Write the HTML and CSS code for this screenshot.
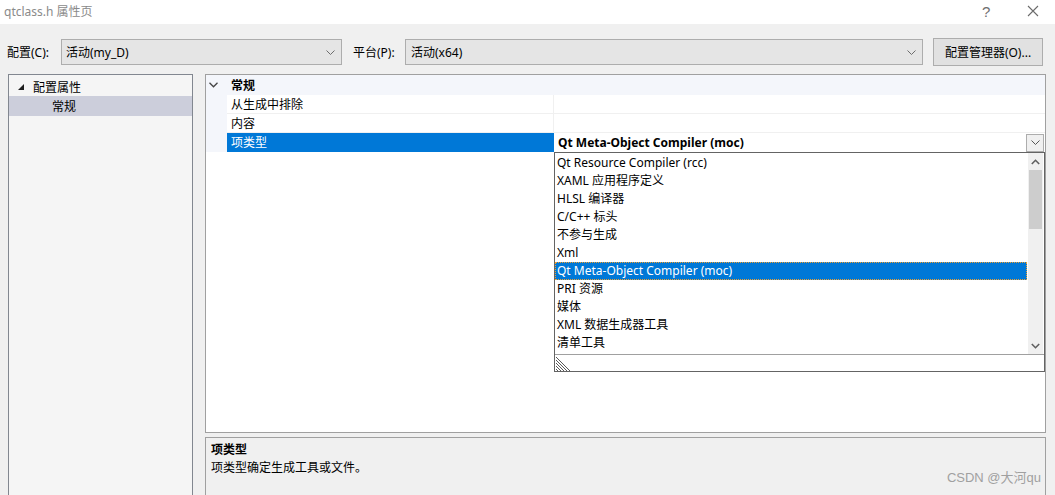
FILE: index.html
```html
<!DOCTYPE html>
<html lang="zh-CN">
<head>
    <meta charset="UTF-8">
    <title>qtclass.h 属性页</title>
    <link rel="stylesheet" href="styles.css">
</head>
<body>
    <div class="window">
        <div class="titlebar">
            <span class="title">qtclass.h 属性页</span>
            <span class="help">?</span>
            <span class="close">
                <svg width="12" height="12" viewBox="0 0 12 12"><path d="M1 1L11 11M11 1L1 11" stroke="#6b6b6b" stroke-width="1.1" fill="none"/></svg>
            </span>
        </div>

        <div class="toolbar">
            <label class="tb-label">配置(C):</label>
            <div class="combo combo-config">
                <span>活动(my_D)</span>
                <svg class="chev" width="9" height="5" viewBox="0 0 9 5"><path d="M0.5 0.5L4.5 4.5L8.5 0.5" stroke="#6d6d6d" fill="none"/></svg>
            </div>
            <label class="tb-label">平台(P):</label>
            <div class="combo combo-platform">
                <span>活动(x64)</span>
                <svg class="chev" width="9" height="5" viewBox="0 0 9 5"><path d="M0.5 0.5L4.5 4.5L8.5 0.5" stroke="#6d6d6d" fill="none"/></svg>
            </div>
            <button class="btn">配置管理器(O)...</button>
        </div>

        <div class="main">
            <div class="tree">
                <div class="tree-row">
                    <svg class="tri" width="6" height="6" viewBox="0 0 6 6"><polygon points="6,0 6,6 0,6" fill="#1e1e1e"/></svg>
                    <span>配置属性</span>
                </div>
                <div class="tree-row child selected"><span>常规</span></div>
            </div>

            <div class="right">
                <div class="grid">
                    <div class="cat-row">
                        <svg class="cat-chev" width="9" height="6" viewBox="0 0 9 6"><path d="M0.5 0.8L4.5 4.8L8.5 0.8" stroke="#444" stroke-width="1.3" fill="none"/></svg>
                        <span>常规</span>
                    </div>
                    <div class="prop-row">
                        <div class="gutter"></div>
                        <div class="pname">从生成中排除</div>
                        <div class="pvalue"></div>
                    </div>
                    <div class="prop-row">
                        <div class="gutter"></div>
                        <div class="pname">内容</div>
                        <div class="pvalue"></div>
                    </div>
                    <div class="prop-row active">
                        <div class="gutter"></div>
                        <div class="pname">项类型</div>
                        <div class="pvalue">
                            <span>Qt Meta-Object Compiler (moc)</span>
                            <span class="drop-btn">
                                <svg width="9" height="5" viewBox="0 0 9 5"><path d="M0.5 0.5L4.5 4.5L8.5 0.5" stroke="#555" fill="none"/></svg>
                            </span>
                        </div>
                    </div>

                    <div class="dropdown">
                        <div class="list-area">
                            <div class="items">
                                <div class="item">Qt Resource Compiler (rcc)</div>
                                <div class="item">XAML 应用程序定义</div>
                                <div class="item">HLSL 编译器</div>
                                <div class="item">C/C++ 标头</div>
                                <div class="item">不参与生成</div>
                                <div class="item">Xml</div>
                                <div class="item selected">Qt Meta-Object Compiler (moc)</div>
                                <div class="item">PRI 资源</div>
                                <div class="item">媒体</div>
                                <div class="item">XML 数据生成器工具</div>
                                <div class="item">清单工具</div>
                            </div>
                            <div class="scrollbar">
                                <svg class="arrow" width="9" height="6" viewBox="0 0 9 6"><path d="M0.8 5L4.5 1.3L8.2 5" stroke="#606060" stroke-width="1.6" fill="none"/></svg>
                                <div class="track"><div class="thumb"></div></div>
                                <svg class="arrow" width="9" height="6" viewBox="0 0 9 6"><path d="M0.8 1L4.5 4.7L8.2 1" stroke="#606060" stroke-width="1.6" fill="none"/></svg>
                            </div>
                        </div>
                        <div class="grip-row">
                            <svg width="16" height="16" viewBox="0 0 16 16">
                                <path d="M0 2L14 16M0 5L11 16M0 8L8 16M0 11L5 16M0 14L2 16" stroke="#5a5a5a" stroke-width="1" fill="none"/>
                            </svg>
                        </div>
                    </div>
                </div>

                <div class="desc">
                    <div class="desc-title">项类型</div>
                    <div class="desc-text">项类型确定生成工具或文件。</div>
                </div>
            </div>
        </div>

        <div class="watermark">CSDN @大河qu</div>
    </div>
</body>
</html>
```

FILE: styles.css
```css
html, body {
    margin: 0;
    padding: 0;
}

body {
    width: 1055px;
    height: 495px;
    overflow: hidden;
    background-color: #f0f0f0;
    font-family: "Noto Sans", "Noto Sans CJK SC", sans-serif;
    font-size: 12px;
    color: #000;
}

.window {
    position: relative;
    height: 495px;
    display: flex;
    flex-direction: column;
}

/* title bar */
.titlebar {
    height: 24px;
    background-color: #fff;
    display: flex;
    align-items: center;
    padding-bottom: 2px;
    box-sizing: border-box;
}

.title {
    margin-left: 4px;
    color: #8a8a8a;
    font-size: 12px;
}

.help {
    margin-left: auto;
    width: 12px;
    color: #6f6f6f;
    font-size: 15px;
    font-family: "Liberation Sans", sans-serif;
}

.close {
    display: flex;
    margin-left: 33px;
    margin-right: 16px;
}

/* config row */
.toolbar {
    display: flex;
    align-items: center;
    height: 28px;
    margin-top: 14px;
    margin-bottom: 8px;
}

.tb-label {
    margin-left: 7px;
    width: 54px;
}

.combo {
    height: 26px;
    box-sizing: border-box;
    background-color: #e5e5e5;
    border: 1px solid #adadad;
    display: flex;
    align-items: center;
    padding-left: 4px;
    padding-right: 6px;
}

.combo .chev {
    margin-left: auto;
}

.combo-config {
    width: 281px;
    margin-right: 4px;
}

.combo-platform {
    width: 518px;
}

.combo-platform span {
    margin-left: 1px;
}

.combo-config + .tb-label {
    width: 52px;
}

.btn {
    margin-left: 10px;
    width: 110px;
    height: 28px;
    box-sizing: border-box;
    background-color: #e1e1e1;
    border: 1px solid #adadad;
    font-family: inherit;
    font-size: 12px;
    padding: 0;
    color: #000;
}

/* main area */
.main {
    flex: 1;
    display: flex;
    min-height: 0;
}

.tree {
    margin-left: 8px;
    width: 185px;
    box-sizing: border-box;
    border: 1px solid #828790;
    border-bottom: none;
    background-color: #f5f5f5;
    padding-top: 2px;
}

.tree-row {
    height: 19px;
    display: flex;
    align-items: center;
}

.tree-row .tri {
    margin-left: 9px;
    margin-right: 9px;
}

.tree-row.child {
    height: 20px;
    padding-left: 43px;
}

.tree-row.selected {
    background-color: #cccedb;
}

.right {
    margin-left: 12px;
    width: 841px;
    display: flex;
    flex-direction: column;
}

.grid {
    position: relative;
    height: 359px;
    box-sizing: border-box;
    border: 1px solid #a0a0a0;
    background-color: #fff;
    display: flex;
    flex-direction: column;
}

.cat-row {
    height: 20px;
    background-color: #f4f6fb;
    display: flex;
    align-items: center;
    font-weight: bold;
}

.cat-chev {
    margin-left: 3px;
    margin-right: 13px;
}

.prop-row {
    height: 19px;
    display: flex;
}

.gutter {
    width: 21px;
    background-color: #f4f6fb;
}

.pname {
    width: 327px;
    padding-left: 4px;
    box-sizing: border-box;
    border-bottom: 1px solid #f0f0f0;
    border-right: 1px solid #f0f0f0;
    display: flex;
    align-items: center;
}

.pvalue {
    flex: 1;
    border-bottom: 1px solid #f0f0f0;
    display: flex;
    align-items: center;
    padding-left: 4px;
}

.prop-row.active .pname {
    background-color: #0078d7;
    color: #fff;
    border-color: #0078d7;
}

.prop-row.active .pvalue {
    font-weight: bold;
    border-bottom: none;
}

.drop-btn {
    margin-left: auto;
    margin-right: 1px;
    width: 18px;
    height: 18px;
    box-sizing: border-box;
    border: 1px solid #adadad;
    background-color: #f0f0f0;
    display: flex;
    align-items: center;
    justify-content: center;
}

/* dropdown list, lies over the grid */
.dropdown {
    position: absolute;
    left: 348px;
    top: 77px;
    width: 491px;
    height: 220px;
    box-sizing: border-box;
    border: 1px solid #646464;
    background-color: #fff;
    display: flex;
    flex-direction: column;
}

.list-area {
    height: 201px;
    display: flex;
    border-bottom: 1px solid #a0a0a0;
}

.items {
    flex: 1;
    padding-top: 1px;
    padding-right: 1px;
}

.item {
    height: 18px;
    line-height: 18px;
    padding-left: 2px;
    box-sizing: border-box;
    white-space: nowrap;
}

.item.selected {
    background-color: #0078d7;
    color: #fff;
    outline: 1px dotted #f0a030;
    outline-offset: -1px;
}

.scrollbar {
    width: 15px;
    margin-right: 1px;
    background-color: #f0f0f0;
    display: flex;
    flex-direction: column;
    align-items: center;
}

.track {
    flex: 1;
    width: 100%;
    padding: 0 1px;
    box-sizing: border-box;
}

.thumb {
    height: 59px;
    background-color: #cdcdcd;
}

.scrollbar .arrow:first-child {
    margin: 6px 0 5px;
}

.scrollbar .arrow:last-child {
    margin: 4px 0 5px;
}

.grip-row {
    flex: 1;
    display: flex;
    align-items: flex-end;
    padding-left: 1px;
}

.grip-row svg {
    display: block;
}

/* description */
.desc {
    margin-top: 4px;
    flex: 1;
    border: 1px solid #a0a0a0;
    border-bottom: none;
    background-color: #f0f0f0;
    padding: 3px 5px;
}

.desc-title {
    font-weight: bold;
    height: 18px;
    line-height: 18px;
}

.desc-text {
    height: 18px;
    line-height: 18px;
}

.watermark {
    position: absolute;
    right: 14px;
    bottom: 9px;
    color: #a0a0a0;
    font-size: 13px;
    font-family: "Liberation Sans", "Noto Sans CJK SC", sans-serif;
}
```
